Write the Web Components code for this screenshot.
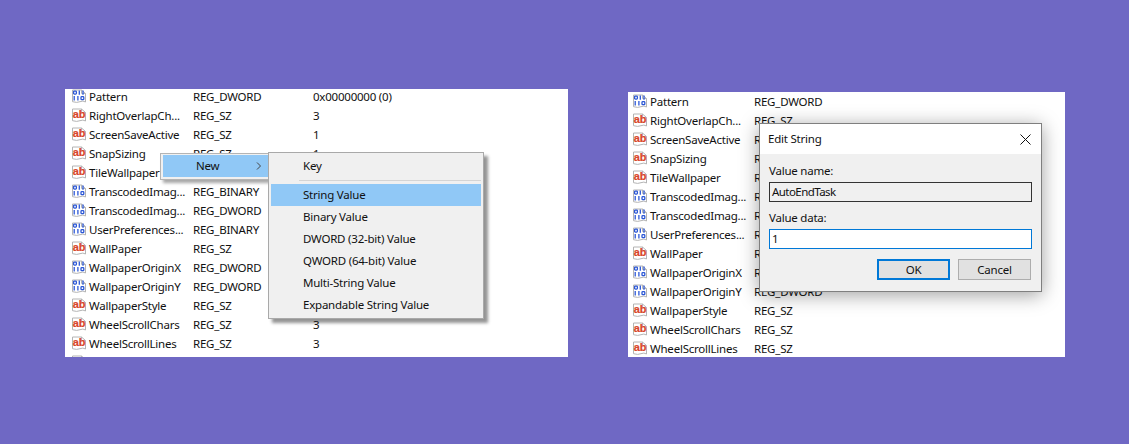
<!DOCTYPE html>
<html lang="en"><head><meta charset="utf-8"><title>Registry string value</title>
<style>
html,body{margin:0;padding:0;height:444px;overflow:hidden;background:#6f68c4}
body{font:11.5px/16px "Noto Sans","Open Sans",sans-serif;letter-spacing:-.22px;color:#111}
</style></head><body>
<reg-stage>
<reg-panel style="--w:503px;--h:268px;--lead:24px;--shift:-1.5px">
  <reg-row kind="bin" name="Pattern" type="REG_DWORD" data="0x00000000 (0)"></reg-row>
  <reg-row kind="ab" name="RightOverlapCh..." type="REG_SZ" data="3"></reg-row>
  <reg-row kind="ab" name="ScreenSaveActive" type="REG_SZ" data="1"></reg-row>
  <reg-row kind="ab" name="SnapSizing" type="REG_SZ" data="1"></reg-row>
  <reg-row kind="ab" name="TileWallpaper" type="REG_SZ"></reg-row>
  <reg-row kind="bin" name="TranscodedImag..." type="REG_BINARY"></reg-row>
  <reg-row kind="bin" name="TranscodedImag..." type="REG_DWORD"></reg-row>
  <reg-row kind="bin" name="UserPreferences..." type="REG_BINARY"></reg-row>
  <reg-row kind="ab" name="WallPaper" type="REG_SZ"></reg-row>
  <reg-row kind="bin" name="WallpaperOriginX" type="REG_DWORD"></reg-row>
  <reg-row kind="bin" name="WallpaperOriginY" type="REG_DWORD"></reg-row>
  <reg-row kind="ab" name="WallpaperStyle" type="REG_SZ"></reg-row>
  <reg-row kind="ab" name="WheelScrollChars" type="REG_SZ" data="3"></reg-row>
  <reg-row kind="ab" name="WheelScrollLines" type="REG_SZ" data="3"></reg-row>
  <reg-row kind="ab"></reg-row>
  <new-menu slot="over"></new-menu>
</reg-panel>
<reg-panel style="--w:437px;--h:265px;--lead:22px;--shift:.5px">
  <reg-row kind="bin" name="Pattern" type="REG_DWORD"></reg-row>
  <reg-row kind="ab" name="RightOverlapCh..." type="REG_SZ"></reg-row>
  <reg-row kind="ab" name="ScreenSaveActive" type="REG_SZ"></reg-row>
  <reg-row kind="ab" name="SnapSizing" type="REG_SZ"></reg-row>
  <reg-row kind="ab" name="TileWallpaper" type="REG_SZ"></reg-row>
  <reg-row kind="bin" name="TranscodedImag..." type="REG_BINARY"></reg-row>
  <reg-row kind="bin" name="TranscodedImag..." type="REG_DWORD"></reg-row>
  <reg-row kind="bin" name="UserPreferences..." type="REG_BINARY"></reg-row>
  <reg-row kind="ab" name="WallPaper" type="REG_SZ"></reg-row>
  <reg-row kind="bin" name="WallpaperOriginX" type="REG_DWORD"></reg-row>
  <reg-row kind="bin" name="WallpaperOriginY" type="REG_DWORD"></reg-row>
  <reg-row kind="ab" name="WallpaperStyle" type="REG_SZ"></reg-row>
  <reg-row kind="ab" name="WheelScrollChars" type="REG_SZ"></reg-row>
  <reg-row kind="ab" name="WheelScrollLines" type="REG_SZ"></reg-row>
  <edit-dialog slot="over"></edit-dialog>
</reg-panel>
</reg-stage>
<script>
function def(name, css, html){
  customElements.define(name, class extends HTMLElement{
    connectedCallback(){
      if(this.shadowRoot) return;
      const r=this.attachShadow({mode:'open'});
      r.innerHTML='<style>'+css+'</style>'+(typeof html==='function'?html(this):html);
    }
  });
}
const esc=s=>(s||'').replace(/&/g,'&amp;').replace(/</g,'&lt;');
def('reg-stage',
 ':host{display:flex;box-sizing:border-box;height:444px;padding:0 64px 87px 65px;justify-content:space-between;align-items:flex-end}',
 '<slot></slot>');
def('reg-panel',
 ':host{display:block;position:relative;width:var(--w);height:var(--h);background:#fff}'+
 '.clip{height:100%;overflow:hidden}.list{display:flex;flex-direction:column;transform:translateY(var(--shift))}',
 '<div class="clip"><div class="list"><slot></slot></div></div><slot name="over"></slot>');
const PAGE='<path d="M1.5 1.5H10.5L14.5 5V13.5Q12 11.8 9 13.2T1.5 13.2Z" fill="#fff" stroke="#b4b4b4"/><path d="M10.5 1.5V5H14.5" fill="none" stroke="#b4b4b4"/>';
const ICON_AB='<svg width="16" height="16" viewBox="0 0 16 16" aria-hidden="true">'+PAGE+'<text x="1.7" y="10.6" font-family="Liberation Sans" font-weight="700" font-size="11" letter-spacing="0" fill="#d9462a" stroke="#d9462a" stroke-width=".2">ab</text></svg>';
const ICON_BIN='<svg width="16" height="16" viewBox="0 0 16 16" aria-hidden="true">'+PAGE+'<g fill="none" stroke="#2b57d6" stroke-width="1.3"><rect x="2.6" y="2.6" width="2.8" height="3" rx=".8"/><path d="M8.3 2V6.3M12 2V6.3M3.2 7.6V11.9M6.9 7.6V11.9"/><rect x="10" y="8.2" width="2.8" height="3" rx=".8"/></g></svg>';
def('reg-row',
 ':host{display:grid;grid-template-columns:var(--lead) 104px 120px 1fr;height:19px;line-height:17px;white-space:nowrap;align-items:start}'+
 '.i{display:flex;justify-content:flex-end;padding:1px 2px 0 0;height:16px}svg{display:block}',
 h=>'<div class="i">'+(h.getAttribute('kind')==='bin'?ICON_BIN:ICON_AB)+'</div><div>'+esc(h.getAttribute('name'))+'</div><div>'+esc(h.getAttribute('type'))+'</div><div>'+esc(h.getAttribute('data'))+'</div>');
def('menu-item',
 ':host{display:block;height:22px;line-height:22px;padding-left:32px;white-space:nowrap}:host([on]){background:#90c8f6}',
 '<slot></slot>');
def('new-menu',
 ':host{display:contents}'+
 '.new{position:absolute;left:95px;top:64px;width:110px;height:27px;box-sizing:border-box;background:#f0f0f0;border:1px solid #b4b4b4;padding:1px 0 2px 2px;box-shadow:3px 3px 3px rgba(0,0,0,.35)}'+
 '.hi{display:flex;align-items:center;justify-content:space-between;background:#90c8f6;height:22px;padding:0 7px 0 33px}'+
 '.sub{position:absolute;left:203px;top:63px;width:216px;height:167px;box-sizing:border-box;background:#f0f0f0;border:1px solid #a9a9a9;padding:2px;box-shadow:4px 4px 3px rgba(0,0,0,.42)}'+
 '.sep{height:1px;background:#d4d4d4;margin:3px 0 3px 28px}',
 '<div class="new"><div class="hi"><span>New</span><svg width="6" height="8" viewBox="0 0 6 8" aria-hidden="true"><path d="M1 .5 4.5 4 1 7.5" fill="none" stroke="#444"/></svg></div></div>'+
 '<div class="sub"><menu-item>Key</menu-item><div class="sep"></div><menu-item on>String Value</menu-item><menu-item>Binary Value</menu-item><menu-item>DWORD (32-bit) Value</menu-item><menu-item>QWORD (64-bit) Value</menu-item><menu-item>Multi-String Value</menu-item><menu-item>Expandable String Value</menu-item></div>');
def('dlg-button',
 ':host{display:flex;align-items:center;justify-content:center;box-sizing:border-box;width:73px;height:21px;background:#e1e1e1;border:1px solid #adadad}:host([primary]){border:2px solid #0078d7}',
 '<slot></slot>');
def('edit-dialog',
 ':host{position:absolute;left:131px;top:31px;width:283px;height:169px;box-sizing:border-box;background:#f0f0f0;border:1px solid #7f7f7f;box-shadow:0 3px 18px rgba(0,0,0,.38);display:flex;flex-direction:column}'+
 '.title{height:30px;background:#fff;display:flex;align-items:center;justify-content:space-between;padding:0 10px 0 8px;flex:none}'+
 '.body{padding:9px 9px 0 9px;display:flex;flex-direction:column}'+
 '.f{height:20px;box-sizing:border-box;line-height:18px;padding-left:2px;margin-top:3px;border:1px solid #333}'+
 '.tight{letter-spacing:-.55px}.f.in{background:#fff;border-color:#0078d7;margin-bottom:10px}.l2{margin-top:8px}'+
 '.btns{display:flex;justify-content:flex-end;gap:8px;padding-right:1px}svg{display:block}',
 '<div class="title"><span>Edit String</span><svg width="11" height="11" viewBox="0 0 11 11" aria-hidden="true"><path d="M.5 .5 10.5 10.5M10.5 .5 .5 10.5" stroke="#111" fill="none"/></svg></div>'+
 '<div class="body"><div>Value name:</div><div class="f tight">AutoEndTask</div><div class="l2">Value data:</div><div class="f in">1</div>'+
 '<div class="btns"><dlg-button primary>OK</dlg-button><dlg-button>Cancel</dlg-button></div></div>');
</script>
</body></html>
